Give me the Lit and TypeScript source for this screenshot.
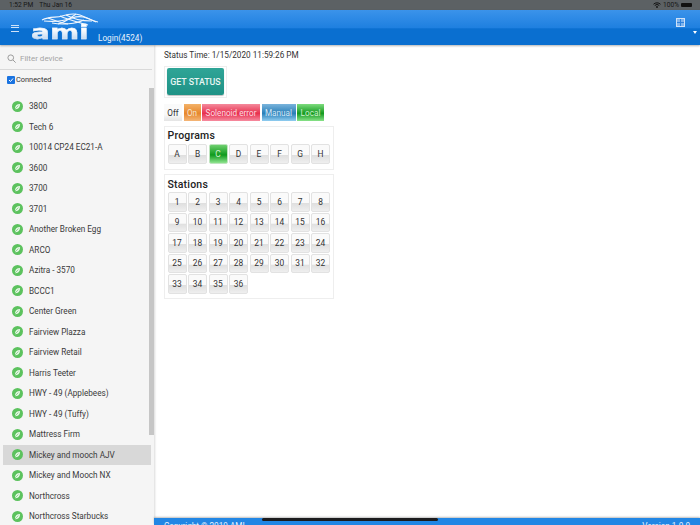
import { LitElement, html, css } from "lit";
import { customElement } from "lit/decorators.js";

const devices = ["3800","Tech 6","10014 CP24 EC21-A","3600","3700","3701","Another Broken Egg","ARCO","Azitra - 3570","BCCC1","Center Green","Fairview Plazza","Fairview Retail","Harris Teeter","HWY - 49 (Applebees)","HWY - 49 (Tuffy)","Mattress Firm","Mickey and mooch AJV","Mickey and Mooch NX","Northcross","Northcross Starbucks"];
const programs = ["A","B","C","D","E","F","G","H"];
const stations = Array.from({ length: 36 }, (_, i) => String(i + 1));

@customElement("app-root")
export class AppRoot extends LitElement {
  static styles = css`
    :host { display: flex; flex-direction: column; width: 700px; height: 525px; overflow: hidden; position: relative; font-family: Roboto, "Liberation Sans", sans-serif; color: #333; background: #fff; }
    .status { height: 10px; flex: none; background: #5c6164; color: #161616; font-size: 6.6px; display: flex; align-items: center; justify-content: space-between; padding: 0 8px 0 9px; line-height: 10px; }
    .status .l { display: flex; gap: 6px; }
    .status .r { display: flex; align-items: center; gap: 2px; }
    .batt { width: 11px; height: 4px; background: #111; border-radius: 1px; }
    .header { height: 35px; flex: none; position: relative; display: flex; background: linear-gradient(#3b93ea 0%, #1f80e0 50%, #0a6fd0 54%, #0a6fd0 100%); box-shadow: 0 1px 2px rgba(0,0,0,.3); z-index: 2; color: #fff; }
    .burger { position: absolute; left: 11px; top: 15px; width: 8px; height: 5px; border-top: 1px solid #cfe2f8; border-bottom: 1px solid #cfe2f8; }
    .burger::after { content: ""; display: block; height: 1px; margin-top: 1px; background: #cfe2f8; }
    .logo { position: absolute; left: 30px; top: 3px; width: 70px; height: 30px; }
    .ami { position: absolute; left: 1px; top: 9.4px; font: bold 20px/20px "DejaVu Sans", sans-serif; transform: scaleX(1.4); transform-origin: left; background: linear-gradient(#ffffff 35%, #b4cfec); -webkit-background-clip: text; background-clip: text; color: transparent; -webkit-text-stroke: .3px rgba(235,243,252,.8); }
    .wave { position: absolute; left: 0; top: 0; }
    .login { position: absolute; left: 98px; top: 23px; font-size: 8.2px; line-height: 11px; color: #e8f2fc; }
    .grid-ic { position: absolute; left: 676px; top: 8px; }
    .caret { position: absolute; left: 693px; top: 21px; width: 0; height: 0; border: 2.5px solid transparent; border-top: 3px solid #fff; border-bottom: 0; }
    .body { flex: 1; display: flex; min-height: 0; }
    .side { width: 154px; flex: none; background: #f5f5f5; box-shadow: 1px 0 2px rgba(0,0,0,.15); display: flex; flex-direction: column; position: relative; overflow: hidden; }
    .filter { height: 25px; flex: none; margin-right: 2px; border-bottom: 1px solid #d9d9d9; display: flex; align-items: center; gap: 4px; padding: 3px 0 0 7px; box-sizing: border-box; font-size: 8px; color: #a4a4a4; }
    .conn { height: 20px; display: flex; align-items: center; gap: 1px; padding: 0 0 1px 7px; box-sizing: border-box; font-size: 7.4px; color: #333; flex: none; }
    .cb { width: 8px; height: 8px; border-radius: 1px; background: #1a73e0; display: flex; }
    .list { padding: 6px 3px 0; display: flex; flex-direction: column; }
    .row { height: 20.5px; flex: none; display: flex; align-items: center; gap: 6px; padding-left: 9px; font-size: 8.2px; color: #3a3a3a; }
    .row.sel { background: #d8d8d8; }
    .dot { width: 11px; height: 11px; border-radius: 50%; background: #5cc25e; flex: none; display: flex; align-items: center; justify-content: center; }
    .scroll { position: absolute; left: 149px; top: 43px; width: 5px; height: 347px; background: #c6c6c6; }
    .main { flex: 1; display: flex; flex-direction: column; min-width: 0; }
    .content { flex: 1; padding: 5px 0 0 10px; display: flex; flex-direction: column; align-items: flex-start; }
    .time { font-size: 8.2px; line-height: 11px; color: #333; }
    .gsbox { margin-top: 5px; width: 59px; height: 29px; border: 1px solid #eee; box-sizing: content-box; padding: 1px 0 0 2px; }
    .gs { width: 57px; height: 27px; border-radius: 2px; background: linear-gradient(#2fa597, #1f9286); box-shadow: 0 1px 1px rgba(0,0,0,.25); font-size: 8.8px; font-weight: 500; display: flex; align-items: center; justify-content: center; color: #eaf6f4; }
    .legend { margin-top: 6px; display: flex; gap: 1.5px; height: 17px; font-size: 8.2px; }
    .lg { display: flex; align-items: center; justify-content: center; }
    .off { width: 18px; background: linear-gradient(#fafafa 60%, #e4e4e4); color: #333; }
    .on { width: 17px; background: linear-gradient(#f3b268, #e8872c 55%, #f4b678); color: #f4e4d0; }
    .sol { width: 58px; background: linear-gradient(#f48a9c, #e8304e 55%, #f68ca0); color: #fbdde2; }
    .man { width: 34px; background: linear-gradient(#7ab4dc, #2a7fb8 55%, #90cdf0); color: #d4e8f6; }
    .loc { width: 27px; background: linear-gradient(#7edc7e, #139a20 55%, #88e288); color: #cdeecd; }
    .box { border: 1px solid #eee; box-sizing: border-box; width: 170px; padding-left: 2.5px; }
    .prog { margin-top: 5px; height: 44px; padding-top: 3px; }
    .prog .keys { margin-top: 2px; }
    .stat { margin-top: 4px; height: 125px; padding-top: 4px; }
    .stat .keys { margin-top: 1px; }
    h3 { margin: 0; font-size: 10.5px; line-height: 12px; font-weight: 500; color: #222; letter-spacing: .2px; }
    .keys { display: grid; grid-template-columns: repeat(8, 19px); grid-auto-rows: 19.5px; gap: 1px 1.5px; }
    .k { border: 1px solid #e2e2e2; border-radius: 2px; box-sizing: border-box; background: linear-gradient(#fafafa 55%, #dfdfdf 58%, #efefef); display: flex; align-items: center; justify-content: center; font-size: 8.4px; color: #333; }
    .k.act { background: linear-gradient(#6fd06f, #0f9a1c 55%, #8ee48e); color: #cdeecd; border-color: #bfe5bf; }
    .footer { height: 7px; flex: none; background: #2186e4; color: #e6f1fc; font-size: 8.2px; line-height: 11px; display: flex; justify-content: space-between; padding: 3px 10px 0 10px; box-sizing: border-box; overflow: hidden; box-shadow: 0 -1px 2px rgba(0,0,0,.25); position: relative; }
    .home { position: absolute; left: 262px; top: 518px; width: 176px; height: 3px; border-radius: 2px; background: #1c1c1e; z-index: 5; }
  `;

  render() {
    return html`
      <div class="status">
        <div class="l"><span>1:52 PM</span><span>Thu Jan 16</span></div>
        <div class="r">
          <svg width="8" height="6" viewBox="0 0 16 12"><path d="M1 4.5a10 10 0 0 1 14 0M3.5 7a6.5 6.5 0 0 1 9 0" fill="none" stroke="#111" stroke-width="2"/><circle cx="8" cy="10" r="1.8" fill="#111"/></svg>
          <span>100%</span><span class="batt"></span>
        </div>
      </div>
      <div class="header">
        <div class="burger"></div>
        <div class="logo">
          <div class="ami">ami</div>
          <svg class="wave" width="70" height="16" viewBox="0 0 70 16" fill="none" stroke="#f0f6fd" stroke-width="1.1">
            <path d="M12 7C20 3 26 5 32 3S44 0 50 2 62 8 68 9"/>
            <path d="M14 8C24 9 34 8 42 5S56 4 66 9"/>
            <path d="M18 5C26 8 32 10 38 11"/>
            <path d="M30 3C36 6 44 8 58 12"/>
            <path d="M46 1C40 5 36 9 28 11"/>
            <path d="M22 10C32 12 46 11 54 7"/>
            <path d="M36 2C44 6 50 8 62 8"/>
          </svg>
        </div>
        <div class="login">Login(4524)</div>
        <svg class="grid-ic" width="9" height="9" viewBox="0 0 9 9"><rect width="9" height="9" fill="#cfe2f8"/><rect x="1" y="1" width="7" height="7" fill="#7fb4ee"/><path d="M4.5 1v7M1 4.5h7" stroke="#2f82dc" stroke-width="1"/></svg>
        <div class="caret"></div>
      </div>
      <div class="body">
        <div class="side">
          <div class="filter">
            <svg width="9" height="9" viewBox="0 0 12 12" fill="none" stroke="#999" stroke-width="1.3"><circle cx="5" cy="5" r="3.8"/><path d="M8 8l3.5 3.5"/></svg>
            <span>Filter device</span>
          </div>
          <div class="conn"><span class="cb"><svg width="8" height="8" viewBox="0 0 8 8" fill="none" stroke="#fff" stroke-width="1"><path d="M2 4l1.5 1.5L6 2.5"/></svg></span><span>Connected</span></div>
          <div class="list">
            ${devices.map((d) => html`<div class="row ${d === "Mickey and mooch AJV" ? "sel" : ""}">
              <span class="dot"><svg width="7" height="7" viewBox="0 0 8 8"><path d="M1 7C1 3 3 1 7 1C7 5 5 7 1 7Z" fill="#e4f6e4"/><path d="M1 7L5 3" stroke="#5cc25e" stroke-width=".7"/></svg></span>
              <span>${d}</span></div>`)}
          </div>
          <div class="scroll"></div>
        </div>
        <div class="main">
          <div class="content">
            <div class="time">Status Time: 1/15/2020 11:59:26 PM</div>
            <div class="gsbox"><div class="gs">GET STATUS</div></div>
            <div class="legend">
              <span class="lg off">Off</span><span class="lg on">On</span><span class="lg sol">Solenoid error</span><span class="lg man">Manual</span><span class="lg loc">Local</span>
            </div>
            <div class="box prog"><h3>Programs</h3>
              <div class="keys">${programs.map((p) => html`<div class="k ${p === "C" ? "act" : ""}">${p}</div>`)}</div>
            </div>
            <div class="box stat"><h3>Stations</h3>
              <div class="keys">${stations.map((s) => html`<div class="k">${s}</div>`)}</div>
            </div>
          </div>
          <div class="footer"><span>Copyright © 2019 AMI</span><span>Version 1.0.0</span></div>
        </div>
      </div>
      <div class="home"></div>
    `;
  }
}
